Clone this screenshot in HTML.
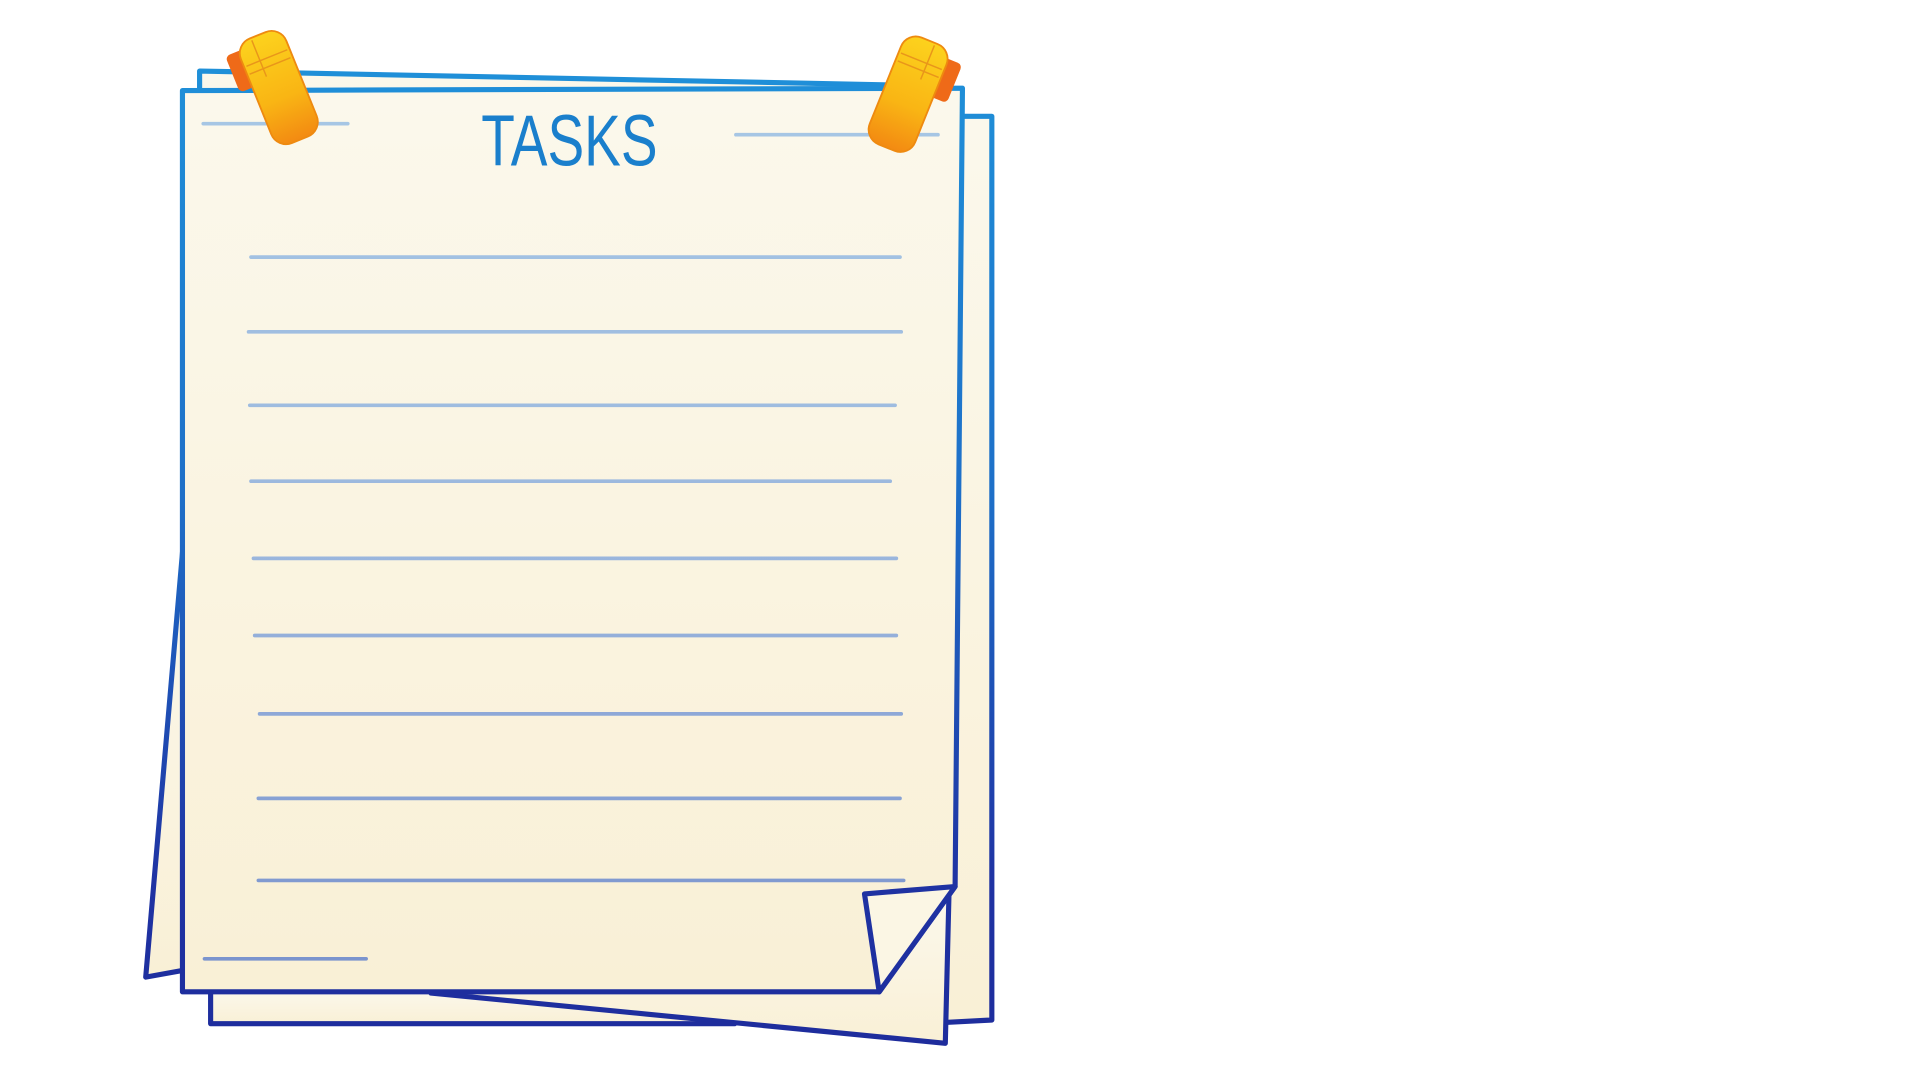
<!DOCTYPE html>
<html><head><meta charset="utf-8"><style>
html,body{margin:0;padding:0;background:#fff;width:1920px;height:1080px;overflow:hidden}
svg{display:block}
</style></head><body>
<svg width="1920" height="1080" viewBox="0 0 1568 882" xmlns="http://www.w3.org/2000/svg">
<defs>
<linearGradient id="st" x1="0" y1="0" x2="0" y2="900" gradientUnits="userSpaceOnUse">
<stop offset="0" stop-color="#1f95db"/><stop offset="0.45" stop-color="#1e6fc8"/><stop offset="0.8" stop-color="#1f33a3"/><stop offset="1" stop-color="#1d2a9a"/>
</linearGradient>
<linearGradient id="pf" x1="0" y1="0" x2="0" y2="1">
<stop offset="0" stop-color="#fbf8ec"/><stop offset="1" stop-color="#f9f0d6"/>
</linearGradient>
<linearGradient id="ln" x1="0" y1="0" x2="0" y2="900" gradientUnits="userSpaceOnUse">
<stop offset="0" stop-color="#aacbe6"/><stop offset="0.5" stop-color="#9ab6dd"/><stop offset="1" stop-color="#7088c8"/>
</linearGradient>
<linearGradient id="clip" x1="0" y1="0" x2="0" y2="1">
<stop offset="0" stop-color="#fcd21d"/><stop offset="0.6" stop-color="#f9b514"/><stop offset="1" stop-color="#f38a12"/>
</linearGradient>
</defs>
<g stroke="url(#st)" stroke-width="4.2" stroke-linejoin="round" fill="url(#pf)">
<path d="M780 95 L810 95 L810 833 L772 835 Z"/>
<path d="M163 58 L760 70 L760 200 L163 200 Z"/>
<path d="M150 440 L119 798 L152 792 Z"/>
<path d="M172 808 L172 836 L600 836 L600 808 Z"/>
<path d="M352 811 L772 852 L775 730 L600 760 Z"/>
<path d="M149 74 L786 72 L780 724 L718 810 L149 810 Z"/>
<path d="M706 730 L780 724 L718 810 Z" fill="#fbf6e4"/>
</g>
<g stroke="url(#ln)" stroke-width="3" stroke-linecap="round">
<line x1="166" y1="101" x2="284" y2="101"/>
<line x1="601" y1="110" x2="766" y2="110"/>
<line x1="205" y1="210" x2="735" y2="210"/>
<line x1="203" y1="271" x2="736" y2="271"/>
<line x1="204" y1="331" x2="731" y2="331"/>
<line x1="205" y1="393" x2="727" y2="393"/>
<line x1="207" y1="456" x2="732" y2="456"/>
<line x1="208" y1="519" x2="732" y2="519"/>
<line x1="212" y1="583" x2="736" y2="583"/>
<line x1="211" y1="652" x2="735" y2="652"/>
<line x1="211" y1="719" x2="738" y2="719"/>
<line x1="167" y1="783" x2="299" y2="783"/>
</g>
<text x="393" y="135" textLength="144" lengthAdjust="spacingAndGlyphs" font-family="Liberation Sans Narrow, Liberation Sans, sans-serif" font-size="56" fill="#1a7fcc" transform="translate(0,-6.75) scale(1,1.05)">TASKS</text>
<g transform="translate(226,70) rotate(-22)">
<rect x="-30" y="-38" width="24" height="32" rx="4" fill="#ef6a18"/>
<rect x="-19" y="-44" width="40" height="92" rx="13" fill="url(#clip)" stroke="#ee8a10" stroke-width="1.5"/>
<path d="M-17 -24 L19 -24 M-5 -42 L-5 -10 M-17 -17 L19 -17" stroke="#e9961a" stroke-width="1.2" fill="none"/>
</g>
<g transform="translate(742,76) rotate(22)">
<rect x="8" y="-38" width="24" height="34" rx="4" fill="#ef6a18"/>
<rect x="-20" y="-46" width="40" height="94" rx="13" fill="url(#clip)" stroke="#ee8a10" stroke-width="1.5"/>
<path d="M-18 -28 L18 -28 M-18 -21 L18 -21 M5 -44 L5 -14" stroke="#e9961a" stroke-width="1.2" fill="none"/>
</g>
</svg>
</body></html>
